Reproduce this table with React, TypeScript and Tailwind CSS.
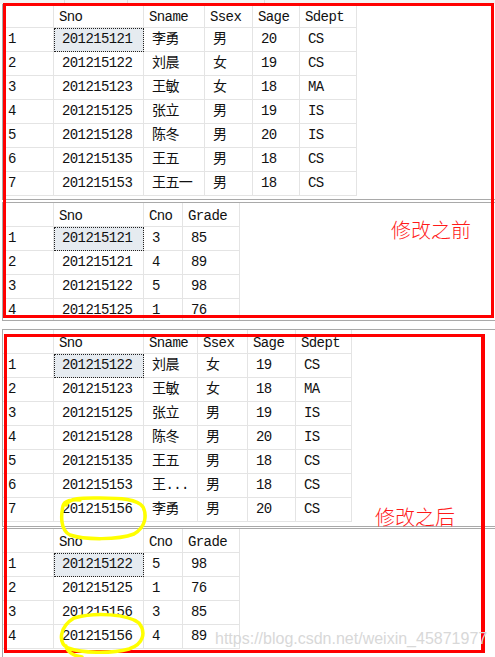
type Col = { title: string; w: string };

const cellFont = { fontFamily: "'Liberation Mono', 'Noto Sans CJK SC', monospace" };

const studentColsA: Col[] = [
  { title: '', w: 'w-[51px]' },
  { title: 'Sno', w: 'w-[90px]' },
  { title: 'Sname', w: 'w-[61px]' },
  { title: 'Ssex', w: 'w-[48px]' },
  { title: 'Sage', w: 'w-[47px]' },
  { title: 'Sdept', w: 'w-[57px]' },
];

const studentColsB: Col[] = [
  { title: '', w: 'w-[51px]' },
  { title: 'Sno', w: 'w-[90px]' },
  { title: 'Sname', w: 'w-[54px]' },
  { title: 'Ssex', w: 'w-[50px]' },
  { title: 'Sage', w: 'w-[48px]' },
  { title: 'Sdept', w: 'w-[56px]' },
];

const scCols: Col[] = [
  { title: '', w: 'w-[51px]' },
  { title: 'Sno', w: 'w-[90px]' },
  { title: 'Cno', w: 'w-[39px]' },
  { title: 'Grade', w: 'w-[57px]' },
];

const before = [
  ['201215121', '李勇', '男', '20', 'CS'],
  ['201215122', '刘晨', '女', '19', 'CS'],
  ['201215123', '王敏', '女', '18', 'MA'],
  ['201215125', '张立', '男', '19', 'IS'],
  ['201215128', '陈冬', '男', '20', 'IS'],
  ['201215135', '王五', '男', '18', 'CS'],
  ['201215153', '王五一', '男', '18', 'CS'],
];

const scBefore = [
  ['201215121', '3', '85'],
  ['201215121', '4', '89'],
  ['201215122', '5', '98'],
  ['201215125', '1', '76'],
];

const after = [
  ['201215122', '刘晨', '女', '19', 'CS'],
  ['201215123', '王敏', '女', '18', 'MA'],
  ['201215125', '张立', '男', '19', 'IS'],
  ['201215128', '陈冬', '男', '20', 'IS'],
  ['201215135', '王五', '男', '18', 'CS'],
  ['201215153', '王...', '男', '18', 'CS'],
  ['201215156', '李勇', '男', '20', 'CS'],
];

const scAfter = [
  ['201215122', '5', '98'],
  ['201215125', '1', '76'],
  ['201215156', '3', '85'],
  ['201215156', '4', '89'],
];

function Grid({ cols, rows }: { cols: Col[]; rows: string[][] }) {
  return (
    <div className="text-[14px] tracking-[-0.6px] text-[#111]" style={cellFont}>
      {/* header */}
      <div className="flex h-[24px]">
        {cols.map((c, i) => (
          <div
            key={i}
            className={`${c.w} shrink-0 flex items-center pt-[3px] pl-[5px] border-r border-b border-[#e4e4e4]`}
          >
            {c.title}
          </div>
        ))}
      </div>
      {rows.map((r, ri) => (
        <div key={ri} className="flex h-[24px]">
          <div className={`${cols[0].w} shrink-0 flex items-center pl-[5px] border-r border-b border-[#e4e4e4]`}>
            {ri + 1}
          </div>
          {r.map((v, ci) => {
            const selected = ri === 0 && ci === 0;
            return (
              <div
                key={ci}
                className={`${cols[ci + 1].w} shrink-0 flex items-center pl-[8px] border-r border-b border-[#e4e4e4] ${
                  selected ? 'bg-[#e6ebf0] outline-1 outline-dotted outline-[#222] -outline-offset-1' : ''
                }`}
              >
                {v}
              </div>
            );
          })}
        </div>
      ))}
    </div>
  );
}

export default function App() {
  return (
    <div className="relative w-[495px] h-[657px] overflow-hidden bg-white">
      {/* previous row sliver */}
      <div className="flex h-[4px] bg-[#f4f4f4]">
        <div className="w-[65px] border-r border-[#dcdcdc]" />
        <div className="w-[63px] border-r border-[#dcdcdc]" />
        <div className="w-[137px] border-r border-[#dcdcdc]" />
      </div>

      {/* screenshot 1 */}
      <div className="h-[196px] ml-[2px] border-l border-b border-[#a9a9a9] overflow-hidden">
        <Grid cols={studentColsA} rows={before} />
      </div>
      <div className="h-[2px]" />
      <div className="h-[119px] ml-[2px] border-l border-t border-b border-[#a9a9a9] overflow-hidden">
        <Grid cols={scCols} rows={scBefore} />
      </div>

      <div className="h-[8px]" />

      {/* screenshot 2 */}
      <div className="h-[198px] ml-[2px] border-l border-t border-b border-[#a9a9a9] overflow-hidden">
        <Grid cols={studentColsB} rows={after} />
      </div>
      <div className="h-[1px]" />
      <div className="h-[129px] ml-[2px] border-l border-t border-[#a9a9a9] overflow-hidden">
        <Grid cols={scCols} rows={scAfter} />
      </div>

      {/* annotations */}
      <div className="absolute left-[3px] top-[3px] w-[491px] h-[315px] border-[3px] border-[#ff0000]" />
      <div className="absolute left-[4px] top-[334px] w-[481px] h-[319px] border-[3px] border-r-[4px] border-[#ff0000]" />

      <div
        className="absolute left-[391px] top-[220px] text-[20px] leading-none font-light text-[#ff1a1a]"
        style={{ fontFamily: "'Noto Sans CJK SC', sans-serif" }}
      >
        修改之前
      </div>
      <div
        className="absolute left-[375px] top-[507px] text-[20px] leading-none font-light text-[#ff1a1a]"
        style={{ fontFamily: "'Noto Sans CJK SC', sans-serif" }}
      >
        修改之后
      </div>

      <svg className="absolute left-0 top-0" width="495" height="657" viewBox="0 0 495 657" fill="none">
        <path
          d="M66 505 C70 497 85 498 100 498 C120 498 138 499 143 507 C147 515 146 527 134 534 C118 540 85 540 70 535 C60 530 61 515 63 506 C64 501 72 499 80 500"
          stroke="#ffff00"
          strokeWidth="3.5"
          strokeLinecap="round"
        />
        <path
          d="M74 618 C95 612 128 614 139 623 C146 632 144 644 129 649 C110 654 82 653 68 648 C58 643 59 627 74 618 M66 646 C67 652 74 656 82 657"
          stroke="#ffff00"
          strokeWidth="3.5"
          strokeLinecap="round"
        />
      </svg>

      <div
        className="absolute left-[215px] top-[631px] text-[16px] leading-none text-[#d8d8d8] whitespace-nowrap"
        style={{ fontFamily: "'Liberation Sans', Arial, sans-serif" }}
      >
        https://blog.csdn.net/weixin_45871977
      </div>
    </div>
  );
}
